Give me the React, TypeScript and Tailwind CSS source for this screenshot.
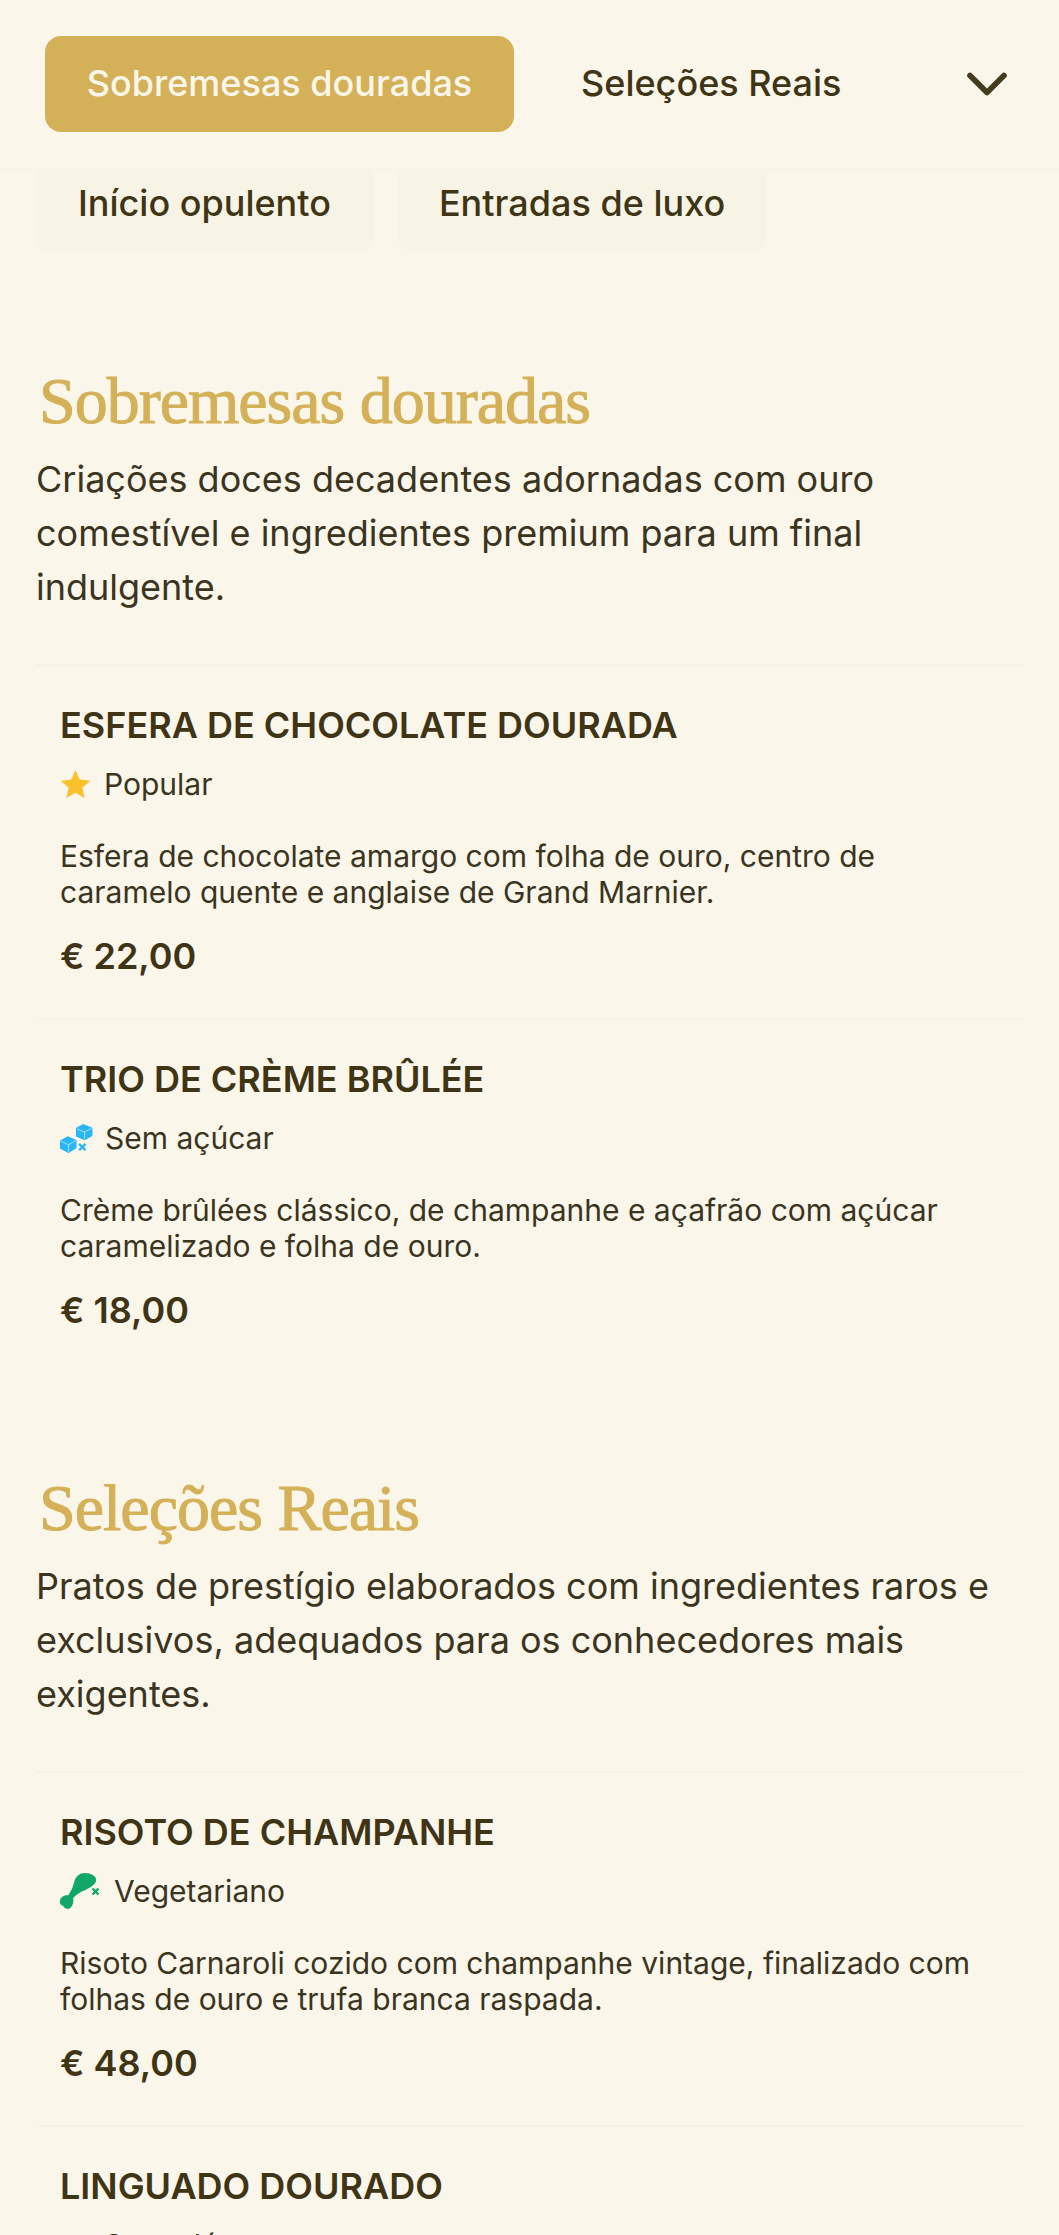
import React from 'react';
import { ChevronDown } from 'lucide-react';

const inter = 'font-["Inter",sans-serif]';

function StarIcon() {
  return (
    <svg viewBox="0 0 32 30" className="w-[31px] h-[30px] -mr-[1px]">
      <path d="M16 .5l4.400 9.900 10.800 1.200-8.100 7.200 2.300 10.600L16 24l-9.400 5.400 2.300-10.600L.8 11.600l10.800-1.200z" fill="#fbc02d" />
    </svg>
  );
}

function SugarFreeIcon() {
  return (
    <svg viewBox="0 0 31 27" className="w-[33px] h-[29px] -mr-[2px]">
      <path d="M22 1l7.500 3v6.500L23 14l-7-3V4z" fill="#29b6f6" stroke="#29b6f6" strokeWidth="2" strokeLinejoin="round" />
      <path d="M7.500 12.500l7 3v6.500L8 26l-7-3.500V16z" fill="#29b6f6" stroke="#29b6f6" strokeWidth="2" strokeLinejoin="round" />
      <path d="M16 4.500l7 3 6.500-3.500M23 7.500V14M1 16l7 3.500 6.500-4M8 19.500V26" fill="none" stroke="#bfe8fb" strokeWidth="0.800" />
      <path d="M18 18.500l6 6M24 18.500l-6 6" stroke="#29b6f6" strokeWidth="2.200" />
    </svg>
  );
}

function VegetarianIcon() {
  return (
    <svg viewBox="0 0 40 34" className="w-[40px] h-[34px] overflow-visible">
      <path d="M9 22C12 18 14 14 15 9 16 4 19 0 25 0 31 0 36 3 35 7 34 11 29 13 25 15 20 17 15 20 12 24 13 27 12 33 8 34 5 34 4 32 4 31 2 31 0 29 1 26 2 23 6 22 9 22Z" fill="#10a86a" stroke="#10a86a" strokeWidth="2" strokeLinejoin="round" />
      <path d="M32.500 14.500l6 6M38.500 14.500l-6 6" stroke="#10a86a" strokeWidth="2.400" />
    </svg>
  );
}

function MenuItem({ title, icon, tag, text, price }: {
  title: string;
  icon: React.ReactNode;
  tag: string;
  text?: string;
  price?: string;
}) {
  return (
    <div className="border-t-2 border-[#f6f2e4] px-[24px] pt-[34px] pb-[37px]">
      <h3 className="text-[36px] leading-[50px] font-semibold text-[#3f3415]">{title}</h3>
      <div className="flex items-center gap-[14px] mt-[9px] h-[50px]">
        {icon}
        <span className="text-[30px] text-[#3a3420]">{tag}</span>
      </div>
      {text && <p className="mt-[29px] text-[30px] leading-[36px] text-[#3a3420]">{text}</p>}
      {price && <p className="mt-[21px] text-[36px] leading-[50px] font-semibold text-[#3f3415]">{price}</p>}
    </div>
  );
}

function Section({ title, description, children }: { title: string; description: string; children: React.ReactNode }) {
  return (
    <section>
      <h2 className='font-["Liberation_Serif",serif] pl-[3px] pt-[6px] text-[66px] leading-[74px] tracking-[-1px] [-webkit-text-stroke:1px] text-[#d4b158]'>{title}</h2>
      <p className="mt-[14px] text-[36px] leading-[54px] text-[#3a3420]">{description}</p>
      <div className="mt-[50px]">{children}</div>
    </section>
  );
}

export default function App() {
  return (
    <div className={`${inter} h-[2235px] overflow-hidden bg-[#fbf6ea]`}>
      <header className="h-[170px] flex items-center pl-[45px] pr-[38px] border-b-2 border-[#f8f4e7]">
        <button className="w-[469px] h-[96px] pb-[2px] rounded-[16px] bg-[#d4b158] text-[36px] text-[#fbf6ea] font-medium">
          Sobremesas douradas
        </button>
        <span className="ml-[67px] mb-[2px] text-[36px] font-medium text-[#3f3415]">Seleções Reais</span>
        <ChevronDown className="ml-auto w-[68px] h-[68px] text-[#453c1e]" strokeWidth={2} />
      </header>

      <nav className="flex gap-[24px] pl-[36px]">
        <span className="h-[82px] px-[42px] pb-[16px] flex items-center rounded-b-[16px] bg-[#f7f4e5] text-[36px] font-medium text-[#3f3415]">Início opulento</span>
        <span className="h-[82px] px-[42px] pb-[16px] flex items-center rounded-b-[16px] bg-[#f7f4e5] text-[36px] font-medium text-[#3f3415]">Entradas de luxo</span>
      </nav>

      <main className="px-[36px] pt-[106px]">
        <Section
          title="Sobremesas douradas"
          description="Criações doces decadentes adornadas com ouro comestível e ingredientes premium para um final indulgente."
        >
          <MenuItem
            title="ESFERA DE CHOCOLATE DOURADA"
            icon={<StarIcon />}
            tag="Popular"
            text="Esfera de chocolate amargo com folha de ouro, centro de caramelo quente e anglaise de Grand Marnier."
            price="€ 22,00"
          />
          <MenuItem
            title="TRIO DE CRÈME BRÛLÉE"
            icon={<SugarFreeIcon />}
            tag="Sem açúcar"
            text="Crème brûlées clássico, de champanhe e açafrão com açúcar caramelizado e folha de ouro."
            price="€ 18,00"
          />
        </Section>

        <div className="mt-[93px]">
          <Section
            title="Seleções Reais"
            description="Pratos de prestígio elaborados com ingredientes raros e exclusivos, adequados para os conhecedores mais exigentes."
          >
            <MenuItem
              title="RISOTO DE CHAMPANHE"
              icon={<VegetarianIcon />}
              tag="Vegetariano"
              text="Risoto Carnaroli cozido com champanhe vintage, finalizado com folhas de ouro e trufa branca raspada."
              price="€ 48,00"
            />
            <MenuItem
              title="LINGUADO DOURADO"
              icon={<span className="w-[30px]" />}
              tag="Sem glúten"
            />
          </Section>
        </div>
      </main>
    </div>
  );
}
